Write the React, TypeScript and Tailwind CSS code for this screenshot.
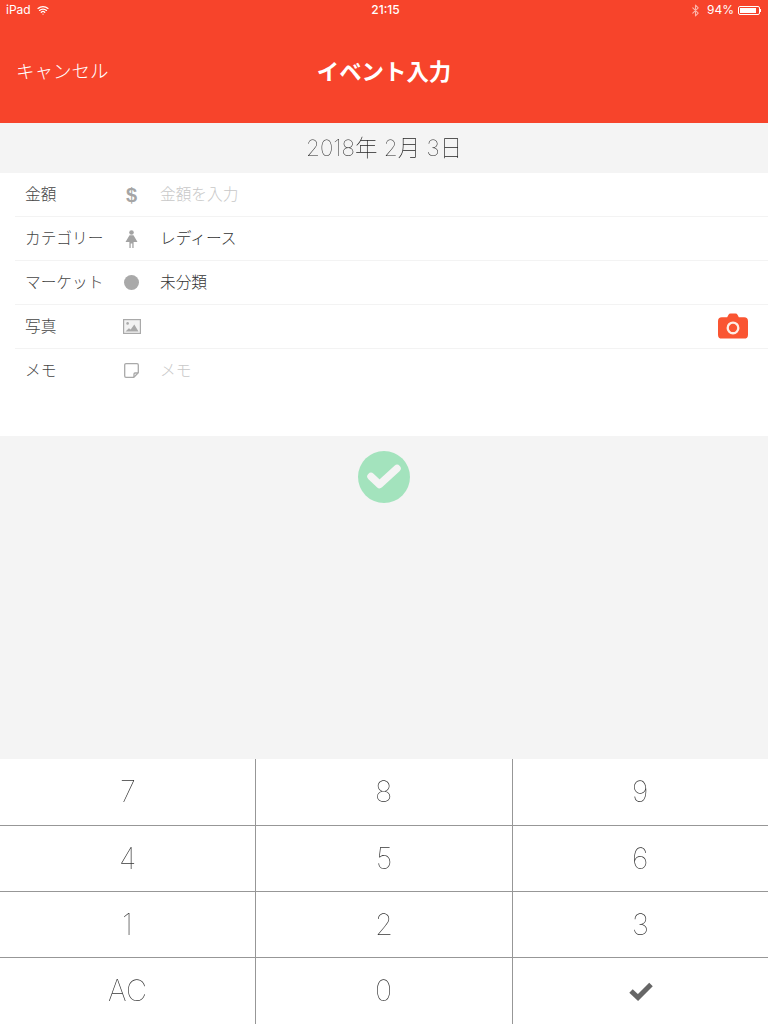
import React from 'react';
import { Bluetooth, Wifi } from 'lucide-react';

const FONT = 'font-["Inter","Noto_Sans_CJK_JP",sans-serif]';

const DollarIcon = () => (
  <span className="text-[20px] leading-none font-bold text-[#a5a5a5] font-['Liberation_Sans',sans-serif]">$</span>
);

const WomanIcon = () => (
  <svg width="13" height="18" viewBox="0 0 13 18" fill="#a3a3a3">
    <circle cx="6.500" cy="2.500" r="2.300" />
    <path d="M4.500 5.200h4L12.500 12H8.600v6H7.300v-4.500H5.700V18H4.400v-6H.5z" />
  </svg>
);

const PhotoIcon = () => (
  <svg width="18" height="15" viewBox="0 0 18 15">
    <rect x="0.600" y="0.600" width="16.800" height="13.800" fill="#f2f2f2" stroke="#a9a9a9" strokeWidth="1.200" />
    <circle cx="4.600" cy="4.400" r="1.300" fill="#a9a9a9" />
    <path d="M2.500 12.500l3.400-3.200 1.800 1.300 3.600-5 4.200 6.900z" fill="#a9a9a9" />
  </svg>
);

const NoteIcon = () => (
  <svg width="15" height="15" viewBox="0 0 15 15" fill="none" stroke="#a9a9a9" strokeWidth="1.300">
    <path d="M2 .7h11a1.300 1.300 0 0 1 1.300 1.300v7.800l-4.500 4.500H2A1.300 1.300 0 0 1 .7 13V2A1.300 1.300 0 0 1 2 .7z" />
    <path d="M14 10h-3a1 1 0 0 0-1 1v3" />
  </svg>
);

const CameraIcon = () => (
  <svg width="30" height="26" viewBox="0 0 31 26">
    <path
      d="M4 4h5.500l1.200-2.400A2.600 2.600 0 0 1 13 .2h5a2.600 2.600 0 0 1 2.300 1.400L21.500 4H27a4 4 0 0 1 4 4v14a4 4 0 0 1-4 4H4a4 4 0 0 1-4-4V8a4 4 0 0 1 4-4z"
      fill="#fa5532"
    />
    <circle cx="15.500" cy="15" r="5.500" fill="none" stroke="#fdeee6" strokeWidth="2.400" />
  </svg>
);

const rows = [
  { label: '金額', icon: <DollarIcon />, value: '金額を入力', placeholder: true },
  { label: 'カテゴリー', icon: <WomanIcon />, value: 'レディース', placeholder: false },
  { label: 'マーケット', icon: <span className="block w-[15px] h-[15px] rounded-full bg-[#a9a9a9]" />, value: '未分類', placeholder: false },
  { label: '写真', icon: <PhotoIcon />, value: '', placeholder: false },
  { label: 'メモ', icon: <NoteIcon />, value: 'メモ', placeholder: true },
];

const keys = ['7', '8', '9', '4', '5', '6', '1', '2', '3', 'AC', '0', 'check'];

export default function App() {
  return (
    <div className={`w-[768px] h-[1024px] flex flex-col bg-[#f4f4f4] overflow-hidden ${FONT}`}>
      {/* header */}
      <div className="h-[123px] bg-[#f7442b] text-white flex flex-col shrink-0">
        <div className="h-5 px-[6px] grid grid-cols-3 items-center text-[12px]">
          <div className="flex items-center gap-[6px]">
            <span>iPad</span>
            <Wifi size={12} strokeWidth={2.500} />
          </div>
          <div className="text-center font-medium pl-[3px]">21:15</div>
          <div className="flex items-center justify-end gap-[3px] pr-[1px]">
            <Bluetooth size={13} className="opacity-60 mr-[2px]" />
            <span>94%</span>
            <div className="w-[22px] h-[9px] ml-[1px] border border-white rounded-[2px] p-[1px]">
              <div className="w-[90%] h-full bg-white" />
            </div>
            <div className="w-[1px] h-[3px] bg-white -ml-[3px]" />
          </div>
        </div>
        <div className="flex-1 grid grid-cols-[1fr_auto_1fr] items-center">
          <span className="pl-[16px] text-[18.500px] font-light">キャンセル</span>
          <span className="text-[22.400px] font-bold">イベント入力</span>
        </div>
      </div>

      {/* date */}
      <div className="h-[50px] shrink-0 flex items-center justify-center text-[22.500px] font-thin text-[#222]">
        <span className="will-change-transform">2018年 2月 3日</span>
      </div>

      {/* form */}
      <div className="h-[263px] shrink-0 bg-white">
        {rows.map((row, i) => (
          <div key={row.label} className={`h-[44px] ml-[15px] flex items-center text-[15.700px] relative border-b ${i < 4 ? 'border-[#f3f3f3]' : 'border-transparent'}`}>
            <div className="w-[93px] pl-[10px] text-[#444] font-light whitespace-nowrap">{row.label}</div>
            <div className="w-[46px] flex justify-center pl-[1px]">{row.icon}</div>
            <div className={`pl-[6px] font-light ${row.placeholder ? 'text-[#c8c8c8]' : 'text-[#333]'}`}>{row.value}</div>
            {row.label === '写真' && (
              <div className="absolute right-[20px] top-[8px]">
                <CameraIcon />
              </div>
            )}
          </div>
        ))}
      </div>

      {/* confirm */}
      <div className="flex-1 flex justify-center pt-[15px]">
        <div className="w-[52px] h-[52px] rounded-full bg-[#a3e3bd] flex items-center justify-center">
          <svg width="36" height="28" viewBox="0 0 36 28" fill="none">
            <path d="M5 13.500l8.500 8L31 5.500" stroke="#f4f4f4" strokeWidth="7.500" strokeLinecap="round" strokeLinejoin="round" />
          </svg>
        </div>
      </div>

      {/* keypad */}
      <div className="h-[265px] shrink-0 bg-white grid grid-cols-[256px_257px_255px] grid-rows-[67px_66px_66px_66px]">
        {keys.map((key, i) => (
          <div
            key={key}
            className={`flex items-center justify-center text-[29px] font-thin text-[#333] border-[#979797] ${i % 3 !== 2 ? 'border-r' : ''} ${i < 9 ? 'border-b' : ''}`}
          >
            {key === 'check' ? (
              <svg width="26" height="20" viewBox="0 0 26 20" fill="none">
                <path d="M3 10l7 6.500L23 3.500" stroke="#666" strokeWidth="5" strokeLinejoin="miter" />
              </svg>
            ) : (
              <span className="will-change-transform">{key}</span>
            )}
          </div>
        ))}
      </div>
    </div>
  );
}
